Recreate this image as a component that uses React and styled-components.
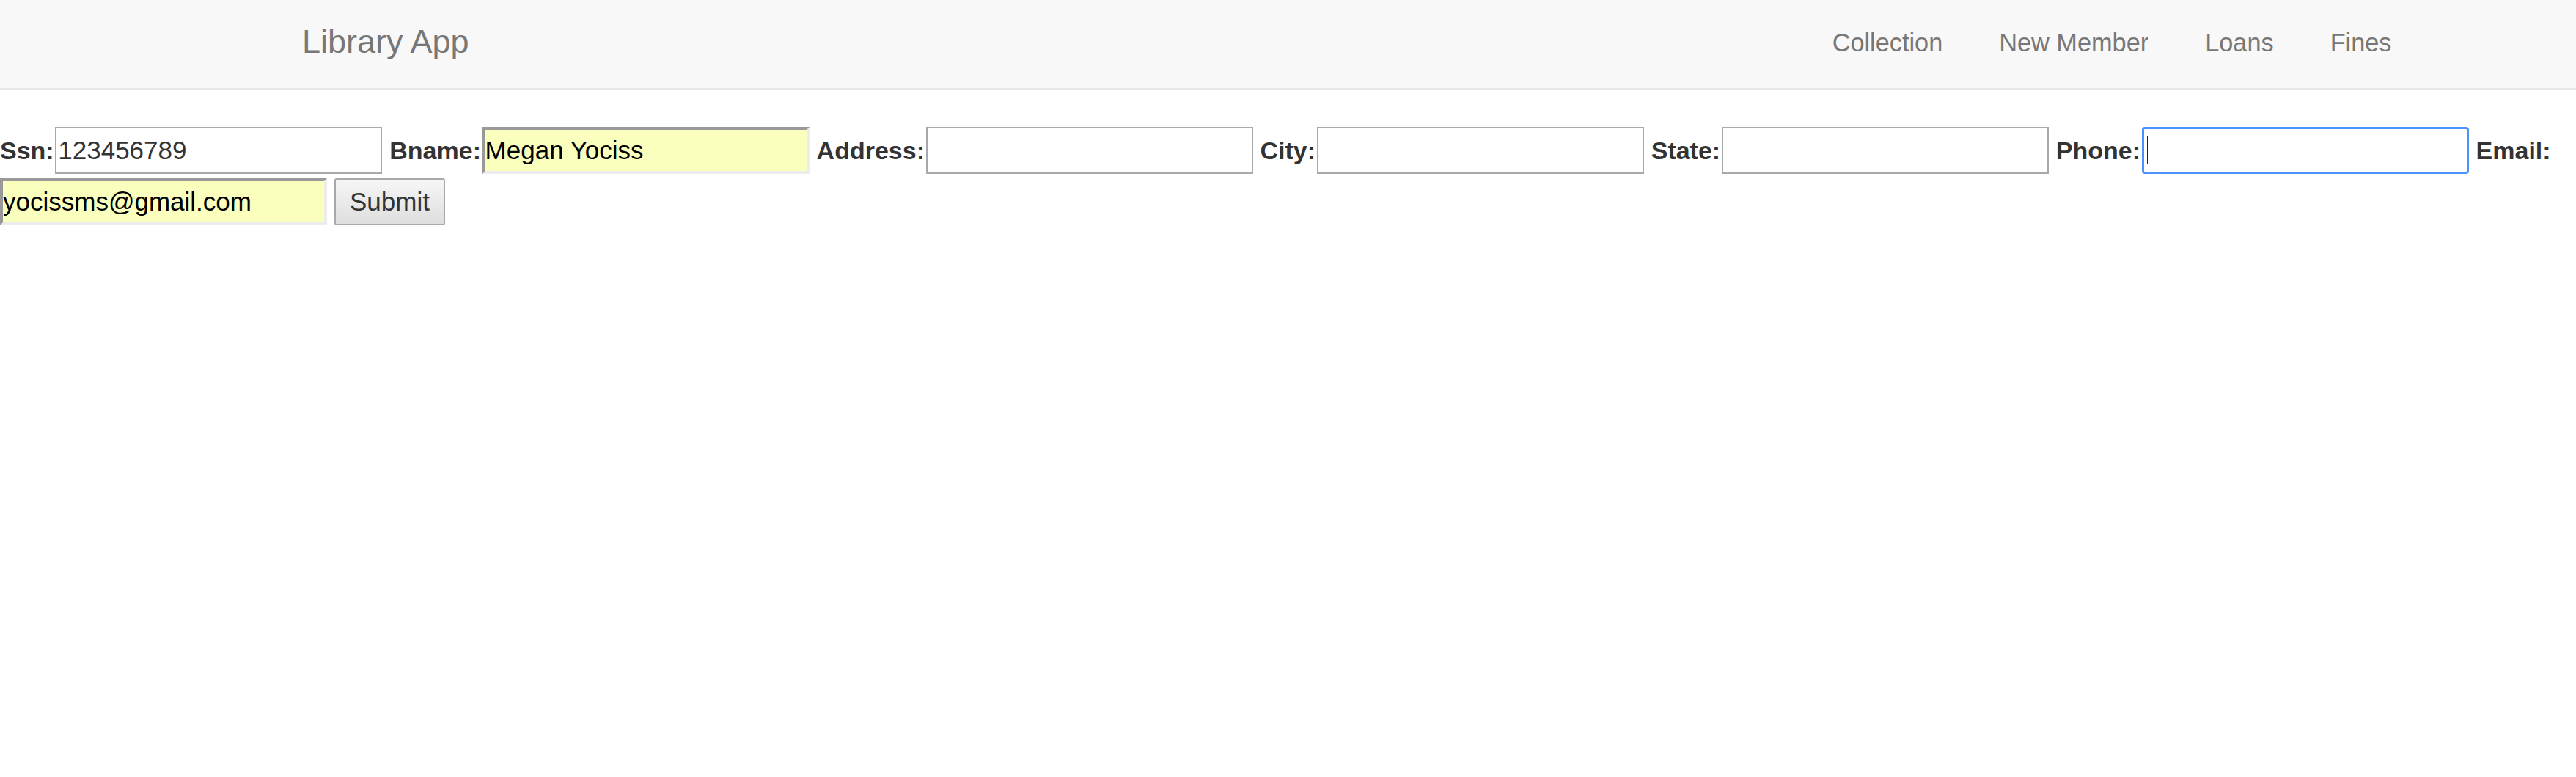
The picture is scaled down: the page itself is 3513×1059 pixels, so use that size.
import React from "react";
import styled, { createGlobalStyle, css } from "styled-components";

const GlobalStyle = createGlobalStyle`
  html, body {
    margin: 0;
    padding: 0;
    background: #ffffff;
  }
  body {
    font-family: "Liberation Sans", Arial, Helvetica, sans-serif;
    color: #333333;
  }
  * { box-sizing: border-box; }
`;

const Navbar = styled.nav`
  display: flex;
  align-items: flex-start;
  justify-content: space-between;
  height: 123px;
  padding: 0 213px 0 376px;
  background: #f8f8f8;
  border-bottom: 3px solid #e7e7e7;
`;

const Brand = styled.a`
  display: block;
  padding: 33px 36px 0;
  font-size: 45px;
  line-height: 48px;
  color: #777777;
  text-decoration: none;
`;

const NavList = styled.ul`
  display: flex;
  margin: 0;
  padding: 0;
  list-style: none;
`;

const NavLink = styled.a`
  display: block;
  padding: 34px 38.5px 0;
  font-size: 34.3px;
  line-height: 48px;
  color: #777777;
  text-decoration: none;
`;

const Form = styled.form`
  display: flex;
  flex-wrap: wrap;
  align-items: center;
  row-gap: 6px;
  margin-top: 50px;
`;

const Label = styled.label`
  font-size: 34px;
  font-weight: bold;
  color: #333333;
  line-height: 40px;
  margin-right: 1.6px;
  white-space: nowrap;
`;

const Field = styled.div`
  position: relative;
  display: flex;
  margin-right: 10px;
`;

const Input = styled.input`
  width: 446px;
  height: 64px;
  margin: 0;
  padding: 0 2px;
  font-family: "Liberation Sans", Arial, sans-serif;
  font-size: 35px;
  color: #333333;
  background: #ffffff;
  border: 2px solid #a9a9a9;
  border-radius: 0;
  outline: none;

  ${(p) =>
    p.$autofill &&
    css`
      background: #faffbd;
      color: #000000;
      border-width: 4px;
      border-style: solid;
      border-color: #999999 #ececec #ececec #999999;
      padding: 0;
    `}

  ${(p) =>
    p.$focused &&
    css`
      border: 3px solid #4d90fe;
      border-radius: 4px;
    `}
`;

const Caret = styled.span`
  position: absolute;
  left: 7px;
  top: 13px;
  width: 2px;
  height: 38px;
  background: #222222;
`;

const SubmitButton = styled.button`
  height: 64px;
  padding: 0 19px;
  font-family: "Liberation Sans", Arial, sans-serif;
  font-size: 35px;
  color: #333333;
  background: linear-gradient(#f6f6f6, #dedede);
  border: 2px solid #a9a9a9;
  border-radius: 3px;
`;

const fields = [
  { label: "Ssn:", value: "123456789" },
  { label: "Bname:", value: "Megan Yociss", autofill: true },
  { label: "Address:", value: "" },
  { label: "City:", value: "" },
  { label: "State:", value: "" },
  { label: "Phone:", value: "", focused: true },
  { label: "Email:", value: "yocissms@gmail.com", autofill: true },
];

export default function App() {
  return (
    <>
      <GlobalStyle />
      <Navbar>
        <Brand href="#">Library App</Brand>
        <NavList>
          {["Collection", "New Member", "Loans", "Fines"].map((t) => (
            <li key={t}>
              <NavLink href="#">{t}</NavLink>
            </li>
          ))}
        </NavList>
      </Navbar>
      <Form onSubmit={(e) => e.preventDefault()}>
        {fields.map((f) => (
          <React.Fragment key={f.label}>
            <Label>{f.label}</Label>
            <Field>
              <Input
                type="text"
                defaultValue={f.value}
                $autofill={f.autofill}
                $focused={f.focused}
              />
              {f.focused && <Caret />}
            </Field>
          </React.Fragment>
        ))}
        <SubmitButton type="submit">Submit</SubmitButton>
      </Form>
    </>
  );
}
